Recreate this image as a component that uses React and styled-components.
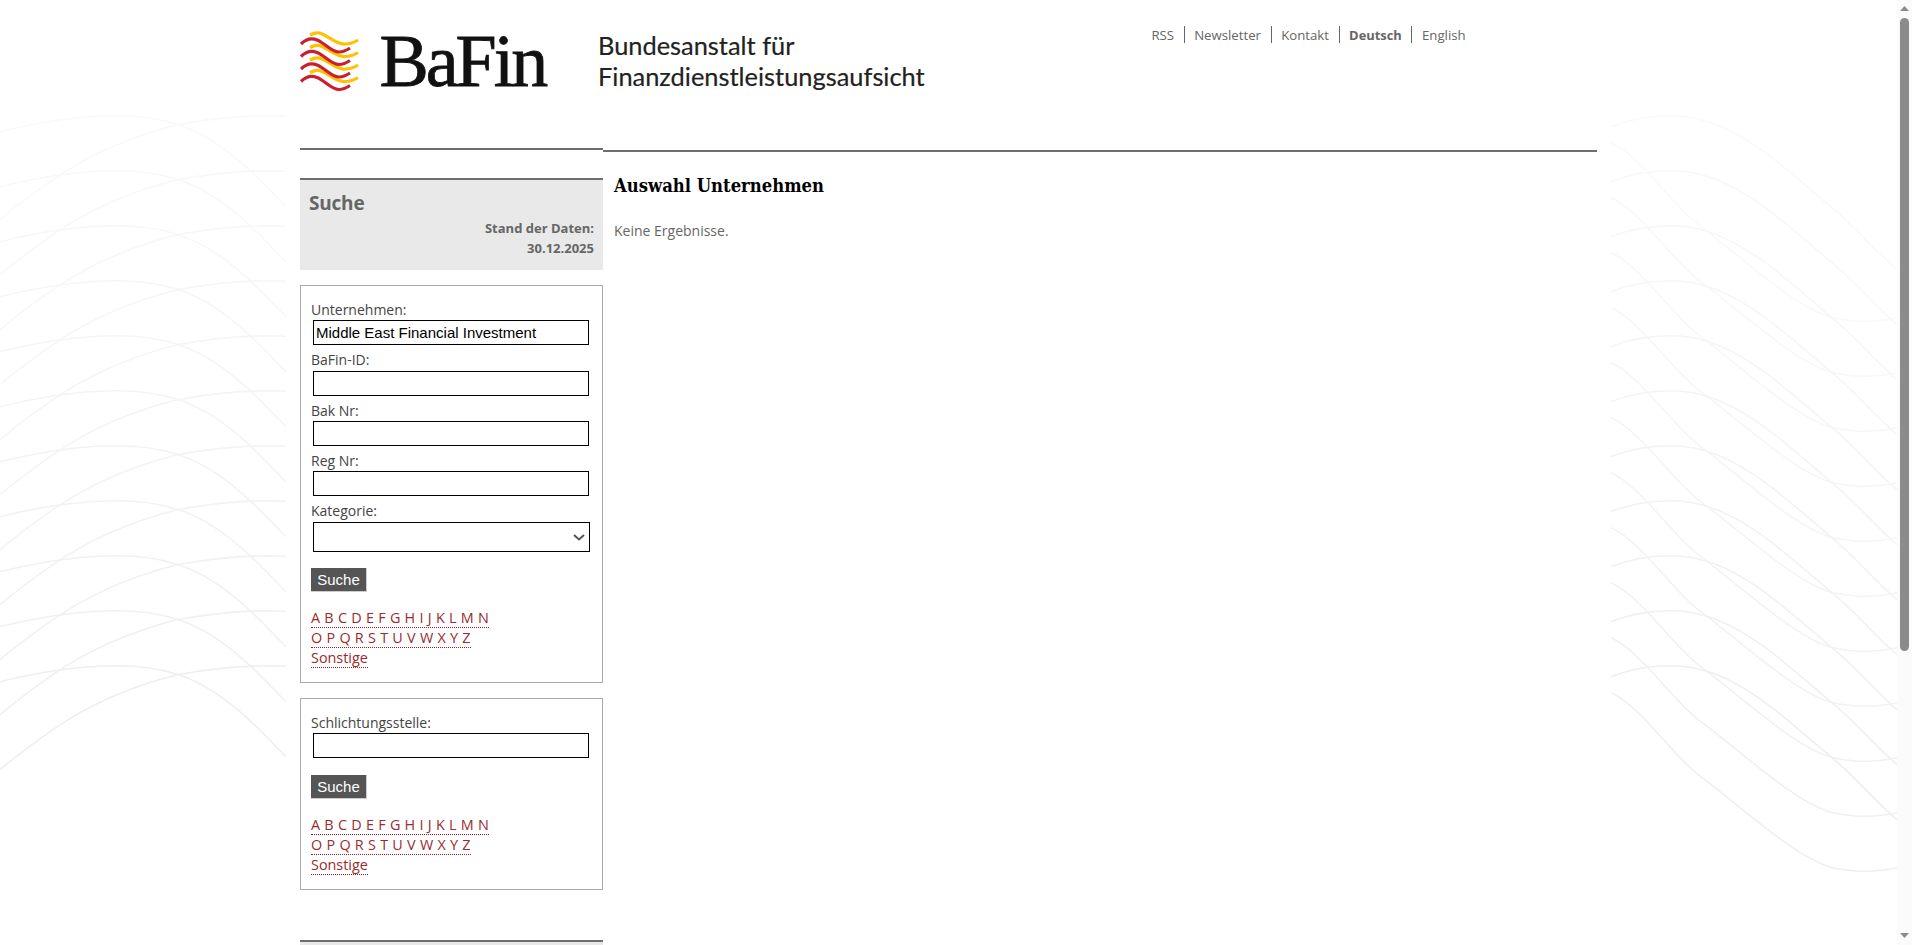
import React from 'react';
import styled, { createGlobalStyle } from 'styled-components';

const Global = createGlobalStyle`
  html { background: #fff; }
  html::-webkit-scrollbar { display: none; }
  body { margin: 0; font-family: "Open Sans", "Noto Sans", sans-serif; color: #666; }
`;

const ScrollTrack = styled.div`
  position: fixed;
  top: 0;
  right: 0;
  z-index: 2;
  width: 15px;
  height: 100vh;
  box-sizing: border-box;
  padding: 6px 3px 7px;
  background: #fbfbfb;
  display: flex;
  flex-direction: column;
  align-items: center;
`;
const ScrollArrow = styled.svg`
  width: 9px;
  height: 5px;
  flex: none;
  fill: #8b8b8b;
`;
const ScrollThumb = styled.div`
  width: 9px;
  height: 633px;
  margin: 7px 0 auto;
  background: #8b8b8b;
  border-radius: 5px;
`;

const Page = styled.div`
  position: relative;
  width: 1897px;
  min-height: 1361px;
  overflow: hidden;
`;
const Waves = styled.svg`
  position: absolute;
  top: 110px;
  ${p => (p.$side === 'left' ? 'left: 0;' : 'right: 0;')}
  width: 286px;
  height: 780px;
  fill: none;
  stroke-width: 1.6;
`;
const Wrap = styled.div`
  position: relative;
  width: 1297px;
  margin: 0 auto;
`;
const Header = styled.header`
  display: grid;
  grid-template-columns: 841px auto;
  height: 148px;
`;
const Brand = styled.div`
  display: flex;
  align-items: flex-start;
  padding-top: 20px;
`;
const Mark = styled.svg`
  width: 75px;
  height: 80px;
  margin-left: -5px;
  flex: none;
  fill: none;
  stroke-width: 3.2;
  stroke-linecap: butt;
`;
const Word = styled.div`
  font: 74px/74px "Liberation Serif", serif;
  letter-spacing: -3px;
  color: #111;
  -webkit-text-stroke: 0.8px #111;
  margin: 4px 0 0 9.4px;
  width: 218.6px;
  flex: none;
`;
const Tagline = styled.div`
  font: 25.4px/31px "Lato", sans-serif;
  color: #222;
  padding-top: 10px;
  -webkit-text-stroke: 0.2px #222;
`;
const Nav = styled.nav`
  display: flex;
  align-items: flex-start;
  padding: 26px 0 0 0.8px;
`;
const NavItem = styled.a`
  height: 17px;
  line-height: 18px;
  padding: 0 9.6px;
  font-size: ${p => (p.$active ? 12.9 : 13.2)}px;
  color: #666;
  font-weight: ${p => (p.$active ? 700 : 400)};
  border-left: ${p => (p.$first ? 'none' : '1px solid #666')};
`;
const Columns = styled.div`
  display: grid;
  grid-template-columns: 303px 1fr;
`;
const Sidebar = styled.aside`
  border-top: 2px solid #6e6e6e;
  padding-top: 28px;
`;
const Panel = styled.div`
  height: 92px;
  box-sizing: border-box;
  background: #e9e9e9;
  border-top: 2px solid #6e6e6e;
  padding: 10px 9px 0;
  margin-bottom: 15px;
`;
const PanelTitle = styled.h2`
  margin: 0;
  font-size: 19px;
  line-height: 26px;
  font-weight: 700;
  color: #666;
  letter-spacing: -0.2px;
`;
const DataDate = styled.div`
  text-align: right;
  font-size: 13px;
  font-weight: 700;
  line-height: 20px;
  margin-top: 2px;
  color: #666;
`;
const Box = styled.form`
  border: 1px solid #aaa;
  padding: 8.8px 0 14px 10px;
  margin-bottom: 15px;
  background: #fff;
`;
const Label = styled.label`
  display: block;
  height: 25.4px;
  padding-top: 5px;
  box-sizing: border-box;
  font-size: 14px;
  line-height: 20px;
  color: #444;
`;
const TextInput = styled.input`
  display: block;
  box-sizing: border-box;
  width: 276px;
  height: 25px;
  margin: 0 0 0 2px;
  padding: 0 2px;
  border: 1px solid #000;
  border-radius: 0;
  outline: none;
  background: #fff;
  color: #000;
  font: 15px "Liberation Sans", Arial, sans-serif;
`;
const SelectWrap = styled.div`
  position: relative;
  width: 277px;
  margin-left: 2px;
`;
const Select = styled.select`
  display: block;
  box-sizing: border-box;
  width: 100%;
  height: 30px;
  margin: 0;
  border: 1px solid #000;
  border-radius: 0;
  background: #fff;
  color: #000;
  appearance: none;
`;
const Chevron = styled.svg`
  position: absolute;
  right: 5px;
  top: 12px;
  width: 12px;
  height: 7px;
  fill: none;
  stroke: #555;
  stroke-width: 2;
  pointer-events: none;
`;
const Button = styled.button`
  display: block;
  box-sizing: border-box;
  width: 56px;
  height: 24px;
  margin-top: ${p => p.$top}px;
  padding: 0;
  border: none;
  border-right: 1px solid #ccc;
  border-bottom: 1px solid #ccc;
  background: #555;
  color: #fff;
  font: 15px "Liberation Sans", Arial, sans-serif;
`;
const Letters = styled.div`
  margin-top: 16px;
`;
const LetterRow = styled.div`
  width: fit-content;
  height: 20px;
  box-sizing: border-box;
  border-bottom: 1px dotted #a01c26;
  font-size: 14.4px;
  line-height: 20px;
  word-spacing: 0.5px;
  white-space: pre;
`;
const LetterLink = styled.a`
  color: #9a2b2e;
`;
const SideFoot = styled.div`
  margin-top: 50px;
  height: 300px;
  background: #e9e9e9;
  border-top: 2px solid #6e6e6e;
`;
const Main = styled.main`
  border-top: 2px solid #6e6e6e;
  margin-top: 2px;
  padding: 21px 11px 0;
`;
const Title = styled.h1`
  margin: 0;
  font: 700 18.3px/26px "DejaVu Serif", serif;
  font-stretch: condensed;
  color: #000;
`;
const Empty = styled.p`
  margin: 22px 0 0;
  font-size: 14px;
  line-height: 20px;
  color: #666;
`;

const line = i => `rgb(${[0, 0, 0].map(() => 249 - i).join(',')})`;
const rows = Array.from({ length: 11 }, (_, i) => i);

const BackgroundWaves = ({ side, a, b }) => (
  <Waves $side={side} viewBox="0 0 286 780" aria-hidden="true">
    {rows.map(i => (
      <g key={i} transform={`translate(0 ${5.7 + i * 55})`} stroke={line(i)}>
        <path d={a} />
        <path d={b} />
      </g>
    ))}
  </Waves>
);

const levels = [0, 12.5, 25, 37.5];
const LogoMark = () => (
  <Mark viewBox="0 0 75 80" aria-hidden="true">
    {levels.map(y => (
      <path key={y} transform={`translate(0 ${y})`} stroke="#fdc300" d="M15 15C19 13 23 12 27 14C35 17 42 25 50 24C55 24 60 22 63 20" />
    ))}
    {levels.map(y => (
      <path key={y} transform={`translate(0 ${y})`} stroke="#c8202f" d="M6 24C11 19 17 18 22 20C30 23 36 32 44 32C48 32 52 30 55 28" />
    ))}
  </Mark>
);

const AZ = ({ letters }) => (
  <LetterRow>
    {letters.split('').map((l, i) => (
      <React.Fragment key={l}>
        {i > 0 ? ' ' : ''}
        <LetterLink>{l}</LetterLink>
      </React.Fragment>
    ))}
  </LetterRow>
);

const Alphabet = () => (
  <Letters>
    <AZ letters="ABCDEFGHIJKLMN" />
    <AZ letters="OPQRSTUVWXYZ" />
    <LetterRow>
      <LetterLink>Sonstige</LetterLink>
    </LetterRow>
  </Letters>
);

export default function App() {
  return (
    <Page>
      <Global />
      <BackgroundWaves
        side="left"
        a="M0 16C40 6 80 0 117 0C140 0 160 3 177 8.5C208 18 232 38 250 55C262 66 274 79 286 91"
        b="M0 104C20 87 40 73 53 64C90 38 130 21 177 9C205 4 240 0 267 0L286 .5"
      />
      <BackgroundWaves
        side="right"
        a="M0 11C20 3 40 0 59 0C72 0 84 2 94 5C140 18 185 62 222 93C243 110 264 135 286 154"
        b="M0 27C30 40 65 95 94 114C140 150 190 195 222 202C235 205 250 206 256 205.5C268 205 278 204 286 202"
      />
      <Wrap>
        <Header>
          <Brand>
            <LogoMark />
            <Word>BaFin</Word>
            <Tagline>
              Bundesanstalt für
              <br />
              Finanzdienstleistungsaufsicht
            </Tagline>
          </Brand>
          <Nav>
            <NavItem $first>RSS</NavItem>
            <NavItem>Newsletter</NavItem>
            <NavItem>Kontakt</NavItem>
            <NavItem $active>Deutsch</NavItem>
            <NavItem>English</NavItem>
          </Nav>
        </Header>
        <Columns>
          <Sidebar>
            <Panel>
              <PanelTitle>Suche</PanelTitle>
              <DataDate>
                Stand der Daten:
                <br />
                30.12.2025
              </DataDate>
            </Panel>
            <Box>
              <Label>Unternehmen:</Label>
              <TextInput defaultValue="Middle East Financial Investment" />
              <Label>BaFin-ID:</Label>
              <TextInput />
              <Label>Bak Nr:</Label>
              <TextInput />
              <Label>Reg Nr:</Label>
              <TextInput />
              <Label>Kategorie:</Label>
              <SelectWrap>
                <Select />
                <Chevron viewBox="0 0 12 7" aria-hidden="true">
                  <path d="M1 1l5 4.5L11 1" />
                </Chevron>
              </SelectWrap>
              <Button type="button" $top={16.2}>Suche</Button>
              <Alphabet />
            </Box>
            <Box>
              <Label>Schlichtungsstelle:</Label>
              <TextInput />
              <Button type="button" $top={17}>Suche</Button>
              <Alphabet />
            </Box>
            <SideFoot />
          </Sidebar>
          <Main>
            <Title>Auswahl Unternehmen</Title>
            <Empty>Keine Ergebnisse.</Empty>
          </Main>
        </Columns>
      </Wrap>
      <ScrollTrack aria-hidden="true">
        <ScrollArrow viewBox="0 0 9 5"><path d="M4.5 0L9 5H0z" /></ScrollArrow>
        <ScrollThumb />
        <ScrollArrow viewBox="0 0 9 5"><path d="M0 0h9L4.5 5z" /></ScrollArrow>
      </ScrollTrack>
    </Page>
  );
}
